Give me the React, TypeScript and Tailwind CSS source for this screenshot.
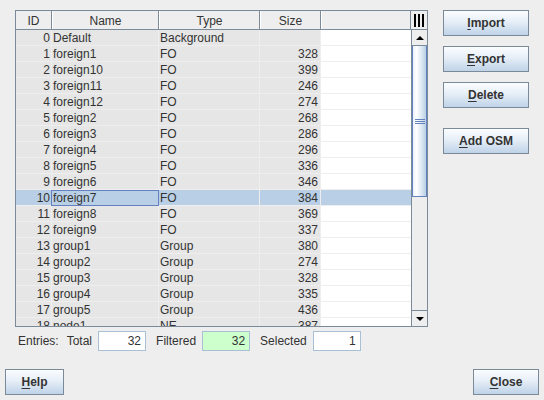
import React from "react";

type Row = { id: number; name: string; type: string; size: string };

const rows: Row[] = [
  { id: 0, name: "Default", type: "Background", size: "" },
  { id: 1, name: "foreign1", type: "FO", size: "328" },
  { id: 2, name: "foreign10", type: "FO", size: "399" },
  { id: 3, name: "foreign11", type: "FO", size: "246" },
  { id: 4, name: "foreign12", type: "FO", size: "274" },
  { id: 5, name: "foreign2", type: "FO", size: "268" },
  { id: 6, name: "foreign3", type: "FO", size: "286" },
  { id: 7, name: "foreign4", type: "FO", size: "296" },
  { id: 8, name: "foreign5", type: "FO", size: "336" },
  { id: 9, name: "foreign6", type: "FO", size: "346" },
  { id: 10, name: "foreign7", type: "FO", size: "384" },
  { id: 11, name: "foreign8", type: "FO", size: "369" },
  { id: 12, name: "foreign9", type: "FO", size: "337" },
  { id: 13, name: "group1", type: "Group", size: "380" },
  { id: 14, name: "group2", type: "Group", size: "274" },
  { id: 15, name: "group3", type: "Group", size: "328" },
  { id: 16, name: "group4", type: "Group", size: "335" },
  { id: 17, name: "group5", type: "Group", size: "436" },
  { id: 18, name: "node1", type: "NE", size: "387" },
];

const SELECTED = 10;

const btn =
  "h-[26px] border border-[#7a8a99] bg-[linear-gradient(to_bottom,#fbfdff_0%,#e6eef7_45%,#bfd3e8_100%)] text-[12px] font-bold text-[#333333] flex items-center justify-center";

function Mnemonic({ first, rest }: { first: string; rest: string }) {
  return (
    <span>
      <span className="underline underline-offset-2">{first}</span>
      {rest}
    </span>
  );
}

function Arrow({ up }: { up: boolean }) {
  return (
    <svg width="8" height="4" viewBox="0 0 8 4">
      {up ? <polygon points="0,4 8,4 4,0" fill="#000" /> : <polygon points="0,0 8,0 4,4" fill="#000" />}
    </svg>
  );
}

function TableRow({ r }: { r: Row }) {
  const sel = r.id === SELECTED;
  const cell = sel ? "bg-[#b8cfe5]" : "bg-[#e6e6e6]";
  return (
    <div className="flex h-[16px] shrink-0 leading-[15px]">
      <div className={`w-[36px] border-r border-b border-[#eeeeee] pt-[1px] pr-[1px] text-right ${cell}`}>{r.id}</div>
      <div
        className={`w-[107px] border-b border-r pl-[1px] ${cell} ${
          sel ? "border-[#6382bf] border-l border-t -ml-[1px] w-[108px]" : "border-[#eeeeee] pt-[1px]"
        }`}
      >
        {r.name}
      </div>
      <div className={`w-[101px] border-r border-b border-[#eeeeee] pt-[1px] pl-[1px] ${cell}`}>{r.type}</div>
      <div className={`w-[61px] border-r border-b border-[#eeeeee] pt-[1px] pr-[2px] text-right ${cell}`}>{r.size}</div>
      <div className={`w-[90px] border-b border-[#eeeeee] ${sel ? "bg-[#b8cfe5]" : "bg-white"}`} />
    </div>
  );
}

export default function App() {
  return (
    <div className="w-[544px] h-[400px] bg-[#eeeeee] flex flex-col font-['Liberation_Sans',Arial,sans-serif] text-[12px] text-[#333333] overflow-hidden">
      <div className="flex pt-[10px] pl-[15px]">
        {/* table */}
        <div className="w-[413px] h-[317px] border border-[#7a8a99] flex flex-col bg-[#eeeeee]">
          <div className="flex h-[19px] shrink-0 border-b border-[#7a8a99]">
            <div className="w-[36px] border-r border-[#7a8a99] text-center pt-[2px] leading-[16px]">ID</div>
            <div className="w-[107px] border-r border-[#7a8a99] border-l border-l-white text-center pt-[2px] leading-[16px]">Name</div>
            <div className="w-[101px] border-r border-[#7a8a99] border-l border-l-white text-center pt-[2px] leading-[16px]">Type</div>
            <div className="w-[61px] border-r border-[#7a8a99] border-l border-l-white text-center pt-[2px] leading-[16px]">Size</div>
            <div className="w-[90px] border-r border-[#7a8a99] border-l border-l-white" />
            <div className="w-[15px] flex items-center justify-center bg-[#eeeeee]">
              <svg width="10" height="13" viewBox="0 0 10 13">
                <rect x="0" y="0" width="2" height="13" fill="#000" />
                <rect x="4" y="0" width="2" height="13" fill="#000" />
                <rect x="8" y="0" width="2" height="13" fill="#000" />
              </svg>
            </div>
          </div>
          <div className="flex flex-1 min-h-0">
            <div className="w-[395px] flex flex-col overflow-hidden bg-white">
              {rows.map((r) => (
                <TableRow key={r.id} r={r} />
              ))}
            </div>
            {/* scrollbar */}
            <div className="w-[16px] flex flex-col border-l border-[#7a8a99] bg-[#eeeeee]">
              <div className="h-[16px] shrink-0 flex items-center justify-center border-b border-[#7a8a99] bg-[#eeeeee]">
                <Arrow up />
              </div>
              <div className="h-[151px] shrink-0 border-x border-b border-[#6382bf] bg-[linear-gradient(to_right,#e9f0f8_0%,#ffffff_25%,#dde8f3_65%,#b8cfe5_100%)] flex flex-col items-center justify-center gap-[1px]">
                <div className="w-[10px] h-[1px] bg-[#6382bf]" />
                <div className="w-[10px] h-[1px] bg-[#6382bf]" />
                <div className="w-[10px] h-[1px] bg-[#6382bf]" />
              </div>
              <div className="flex-1" />
              <div className="h-[16px] shrink-0 flex items-center justify-center border-t border-[#7a8a99] bg-[#eeeeee]">
                <Arrow up={false} />
              </div>
            </div>
          </div>
        </div>
        {/* buttons */}
        <div className="ml-[15px] w-[86px] flex flex-col">
          <button className={btn}>
            <Mnemonic first="I" rest="mport" />
          </button>
          <button className={`${btn} mt-[10px]`}>
            <Mnemonic first="E" rest="xport" />
          </button>
          <button className={`${btn} mt-[10px]`}>
            <Mnemonic first="D" rest="elete" />
          </button>
          <button className={`${btn} mt-[20px]`}>
            <Mnemonic first="A" rest="dd OSM" />
          </button>
        </div>
      </div>

      {/* entries */}
      <div className="flex items-center mt-[4px] pl-[18px] h-[20px]">
        <span>Entries:</span>
        <span className="ml-[8px]">Total</span>
        <div className="ml-[6px] w-[48px] h-[20px] border border-[#a9bfd6] bg-white text-right pr-[4px] leading-[18px]">32</div>
        <span className="ml-[10px]">Filtered</span>
        <div className="ml-[6px] w-[48px] h-[20px] border border-[#a9bfd6] bg-[#ccffcc] text-right pr-[4px] leading-[18px]">32</div>
        <span className="ml-[10px]">Selected</span>
        <div className="ml-[6px] w-[48px] h-[20px] border border-[#a9bfd6] bg-white text-right pr-[4px] leading-[18px]">1</div>
      </div>

      <div className="mt-auto flex justify-between px-[5px] pb-[5px]">
        <button className={`${btn} w-[59px]`}>
          <Mnemonic first="H" rest="elp" />
        </button>
        <button className={`${btn} w-[66px]`}>
          <Mnemonic first="C" rest="lose" />
        </button>
      </div>
    </div>
  );
}
